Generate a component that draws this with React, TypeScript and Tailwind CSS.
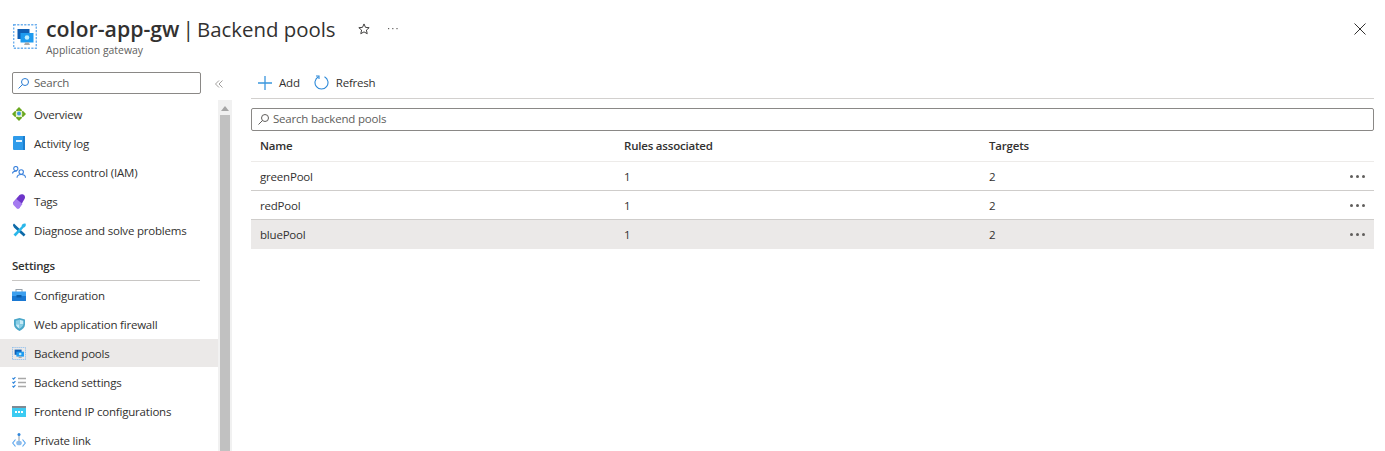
import React from 'react';

const GatewayIcon = ({ w = 24, h = 25 }: { w?: number; h?: number }) => (
  <svg width={w} height={h} viewBox="0 0 24 25" preserveAspectRatio="none">
    <rect x="0.7" y="0.7" width="22.6" height="23.6" fill="none" stroke="#6fb0ee" strokeWidth="1.400" strokeDasharray="2.200 1.300" />
    <rect x="4.500" y="5" width="12" height="10" fill="#0f5fb5" />
    <rect x="7.500" y="9" width="13" height="9.500" fill="#1e9bf0" />
    <circle cx="14" cy="13.500" r="2.300" fill="#bdeeff" />
    <path d="M11 21h6l-1.200-2.500h-3.600z" fill="#a8a8a8" />
  </svg>
);

const Icons: Record<string, React.ReactNode> = {
  overview: (
    <svg width="14" height="14" viewBox="0 0 14 14">
      <path d="M7 0l3.200 3.200L7 6.400 3.800 3.200zM3.200 3.800L6.400 7l-3.200 3.200L0 7zM10.800 3.800L14 7l-3.200 3.200L7.600 7zM7 7.600l3.200 3.200L7 14l-3.200-3.200z" fill="#6aa81f" />
      <circle cx="7" cy="7" r="3.300" fill="#e6f2d0" />
      <circle cx="7" cy="6.500" r="2" fill="#3c9ae0" />
    </svg>
  ),
  activity: (
    <svg width="12" height="14" viewBox="0 0 12 14">
      <rect width="12" height="14" rx="1" fill="#2f9bea" />
      <rect x="10" width="2" height="14" fill="#1b7fd0" />
      <rect x="3" y="4" width="6" height="2" fill="#e6f4ff" />
    </svg>
  ),
  iam: (
    <svg width="14" height="12" viewBox="0 0 14 12" fill="none" stroke="#3b82dc" strokeWidth="1.100">
      <circle cx="3.800" cy="2.600" r="2.100" />
      <path d="M0.500 7.500c0-1.500 1.300-2.300 3.300-2.300h1" />
      <circle cx="9.200" cy="6" r="2.200" />
      <path d="M5 11.800c0-2 1.800-3.300 4.200-3.300s4.300 1.300 4.300 3.300" />
    </svg>
  ),
  tags: (
    <svg width="12" height="15" viewBox="0 0 12 15">
      <path d="M0 8.500L6.500 1c1.500-1.300 4-1 5 .5.800 1.300.5 2.500 0 3.500L6 14.500z" fill="#6d35c9" />
      <path d="M0 8.500L3.500 5l6 5L6 14.500c-.5.500-1.500.5-2.200 0L.5 11C0 10.500-.2 9 0 8.500z" fill="#a57bf0" />
    </svg>
  ),
  diagnose: (
    <svg width="13" height="14" viewBox="0 0 13 14">
      <path d="M1 .5L3 2.500l9.500 9-1.800 2L1 4.500-.2 2z" fill="#0d6aa8" />
      <path d="M12.500 .5c.8 2 .2 3.500-2 4.300L2.500 13.500 .5 11.500l8-8C8.700 1.200 10.500 0 12.500 .5z" fill="#2bb7ea" />
    </svg>
  ),
  config: (
    <svg width="14" height="12" viewBox="0 0 14 12">
      <rect x="4" y="0.500" width="6" height="3" fill="none" stroke="#98a2ab" />
      <rect y="2.500" width="14" height="9.500" fill="#3da0ef" />
      <rect y="7" width="14" height="5" fill="#1a78d2" />
      <rect x="4.500" y="6" width="5" height="2.500" fill="#0c5da8" />
    </svg>
  ),
  firewall: (
    <svg width="11" height="13" viewBox="0 0 11 13">
      <path d="M5.500 0l5.500 1.500v5c0 3-2.500 5-5.500 6.500C2.500 11.500 0 9.500 0 6.500v-5z" fill="#4aa7c9" />
      <path d="M5.500 1.800l3.800 1v3.500H5.500zM5.500 6.300H1.800c.2 1.900 1.800 3.300 3.700 4.400z" fill="#c8ebf7" />
      <path d="M5.500 1.800l-3.700 1v3.500h3.700zM5.500 6.300h3.800c-.2 1.900-1.900 3.300-3.800 4.400z" fill="#8ccfe6" />
    </svg>
  ),
  settings: (
    <svg width="14" height="11" viewBox="0 0 14 11" fill="none">
      <path d="M.5 1l1.100 1.100L3.400.2M.5 5l1.100 1.100 1.800-1.900M.5 9l1.100 1.100 1.800-1.900" stroke="#2f86dc" strokeWidth="1.200" />
      <path d="M6 1.500h8M6 5.500h8M6 9.500h8" stroke="#a8a8a8" strokeWidth="1.300" />
    </svg>
  ),
  frontend: (
    <svg width="14" height="11" viewBox="0 0 14 11">
      <rect width="14" height="11" fill="#3ccbf2" />
      <rect width="14" height="2" fill="#7f8a94" />
      <rect x="3" y="5" width="2" height="2" fill="#fff" />
      <rect x="6" y="5" width="2" height="2" fill="#fff" />
      <rect x="9" y="5" width="2" height="2" fill="#fff" />
    </svg>
  ),
  link: (
    <svg width="14" height="14" viewBox="0 0 14 14" fill="none">
      <path d="M7 2v6" stroke="#8a9aa8" />
      <circle cx="7" cy="1.500" r="1.500" fill="#2f86dc" />
      <path d="M3.500 6.500L.7 10l2.800 3.500M10.500 6.500L13.300 10l-2.800 3.500" stroke="#5ea8ef" strokeWidth="1.200" />
      <ellipse cx="7" cy="10" rx="2.800" ry="2.300" fill="#8cbcec" />
    </svg>
  ),
};

const SearchGlyph = ({ color }: { color: string }) => (
  <svg width="11" height="11" viewBox="0 0 11 11" fill="none" stroke={color}>
    <circle cx="7" cy="4" r="3.500" />
    <path d="M4.500 6.500L.5 10.500" />
  </svg>
);

const Item = ({ icon, label, active }: { icon: React.ReactNode; label: string; active?: boolean }) => (
  <div className={`mb-px flex h-[28px] items-center ${active ? 'bg-[#ebe9e8]' : ''}`}>
    <div className="flex w-[34px] shrink-0 items-center justify-center pl-[4px]">{icon}</div>
    <span className="pt-[1px]">{label}</span>
  </div>
);

const Row = ({ name, active, border }: { name: string; active?: boolean; border?: boolean }) => (
  <div className={`flex h-[29px] items-center border-b ${border ? 'border-[#cfcdcb]' : 'border-transparent'} ${active ? 'bg-[#ebe9e8]' : ''}`}>
    <div className="w-[364px] pl-[9px] pt-[2px]">{name}</div>
    <div className="w-[365px] pl-[9px] pt-[2px]">1</div>
    <div className="flex-1 pl-[9px] pt-[2px]">2</div>
    <div className="flex gap-[3px] pr-[9px]">
      <span className="h-[3px] w-[3px] rounded-full bg-[#605e5c]" />
      <span className="h-[3px] w-[3px] rounded-full bg-[#605e5c]" />
      <span className="h-[3px] w-[3px] rounded-full bg-[#605e5c]" />
    </div>
  </div>
);

export default function App() {
  return (
    <div className="flex h-[451px] flex-col overflow-hidden bg-white text-[11.5px] tracking-[-0.2px] text-[#323130] [font-family:'Open_Sans',sans-serif]">
      <header className="flex h-[72px] shrink-0 items-start pl-[13px] pr-[19px] pt-[15px]">
        <div className="mt-[9px] shrink-0">
          <GatewayIcon />
        </div>
        <div className="ml-[9px] tracking-normal">
          <div className="flex h-[28px] items-center leading-[28px]">
            <span className="text-[21.300px] font-semibold">color-app-gw</span>
            <span className="ml-[3px] text-[21px]">|</span>
            <span className="ml-[3px] text-[20.400px]">Backend pools</span>
            <svg className="ml-[22px]" width="12" height="12" viewBox="0 0 13 13" fill="none" stroke="#323130">
              <path d="M6.500 1l1.600 3.700 4 .4-3 2.600.9 3.900-3.500-2-3.500 2 .9-3.900-3-2.600 4-.4z" />
            </svg>
            <svg className="ml-[18px]" width="10" height="2" viewBox="0 0 10 2" fill="#605e5c">
              <rect width="1.200" height="1.200" />
              <rect x="4.200" width="1.200" height="1.200" />
              <rect x="8.400" width="1.200" height="1.200" />
            </svg>
          </div>
          <div className="text-[10.400px] leading-[14px] text-[#605e5c]">Application gateway</div>
        </div>
        <svg className="ml-auto mt-[8px]" width="12" height="12" viewBox="0 0 12 12" stroke="#323130" fill="none">
          <path d="M.5.500l11 11M11.500.500l-11 11" />
        </svg>
      </header>
      <div className="flex min-h-0 flex-1">
        <aside className="flex w-[232px] shrink-0 flex-col">
          <div className="flex h-[28px] shrink-0 items-start">
            <div className="ml-[12px] flex h-[22px] w-[189px] items-center rounded-[2px] border border-[#8a8886] pl-[5px]">
              <SearchGlyph color="#2b7cd3" />
              <span className="ml-[5px] text-[#605e5c]">Search</span>
            </div>
            <svg className="ml-[14px] mt-[8px]" width="8" height="8" viewBox="0 0 8 8" fill="none" stroke="#a19f9d">
              <path d="M4 .500L.5 4 4 7.500M7.500 .500L4 4l3.500 3.500" />
            </svg>
          </div>
          <div className="flex min-h-0 flex-1">
            <nav className="w-[218px] shrink-0">
              <Item icon={Icons.overview} label="Overview" />
              <Item icon={Icons.activity} label="Activity log" />
              <Item icon={Icons.iam} label="Access control (IAM)" />
              <Item icon={Icons.tags} label="Tags" />
              <Item icon={Icons.diagnose} label="Diagnose and solve problems" />
              <div className="ml-[12px] mr-[18px] mt-[7px] h-[30px] border-b border-[#c8c6c4] pt-[6px] font-semibold leading-[18px]">Settings</div>
              <Item icon={Icons.config} label="Configuration" />
              <Item icon={Icons.firewall} label="Web application firewall" />
              <Item icon={<GatewayIcon w={14} h={13} />} label="Backend pools" active />
              <Item icon={Icons.settings} label="Backend settings" />
              <Item icon={Icons.frontend} label="Frontend IP configurations" />
              <Item icon={Icons.link} label="Private link" />
            </nav>
            <div className="flex w-[14px] shrink-0 flex-col bg-[#f1f1f1] px-[2px]">
              <div className="flex h-[15px] items-center justify-center pt-[2px]">
                <div className="h-0 w-0 border-x-[4px] border-b-[5px] border-x-transparent border-b-[#a6a6a6]" />
              </div>
              <div className="flex-1 bg-[#c1c1c1]" />
            </div>
          </div>
        </aside>
        <main className="ml-[19px] mr-[11px] min-w-0 flex-1">
          <div className="flex h-[27px] items-start border-b border-[#d2d0ce]">
            <div className="flex h-[22px] items-center">
              <svg className="ml-[7px]" width="14" height="14" viewBox="0 0 14 14" stroke="#3a96dd" strokeWidth="1.300">
                <path d="M7 0v14M0 7h14" />
              </svg>
              <span className="ml-[7px]">Add</span>
              <svg className="-mt-[2px] ml-[14px]" width="15" height="15" viewBox="0 0 15 15" fill="none" stroke="#2b88d8" strokeWidth="1.100">
                <path d="M4.500 1.800A6.500 6.500 0 1 0 10.500 1.800" />
                <path d="M2 1h3v3" />
              </svg>
              <span className="ml-[7px]">Refresh</span>
            </div>
          </div>
          <div className="mt-[9px] flex h-[23px] items-center rounded-[2px] border border-[#8a8886] pl-[6px]">
            <SearchGlyph color="#605e5c" />
            <span className="ml-[4px] pb-[1px] text-[#605e5c]">Search backend pools</span>
          </div>
          <div className="flex h-[31px] items-center border-b border-[#edebe9] font-semibold">
            <div className="w-[364px] pl-[9px]">Name</div>
            <div className="w-[365px] pl-[9px]">Rules associated</div>
            <div className="pl-[9px]">Targets</div>
          </div>
          <Row name="greenPool" border />
          <Row name="redPool" border />
          <Row name="bluePool" active />
        </main>
      </div>
    </div>
  );
}
